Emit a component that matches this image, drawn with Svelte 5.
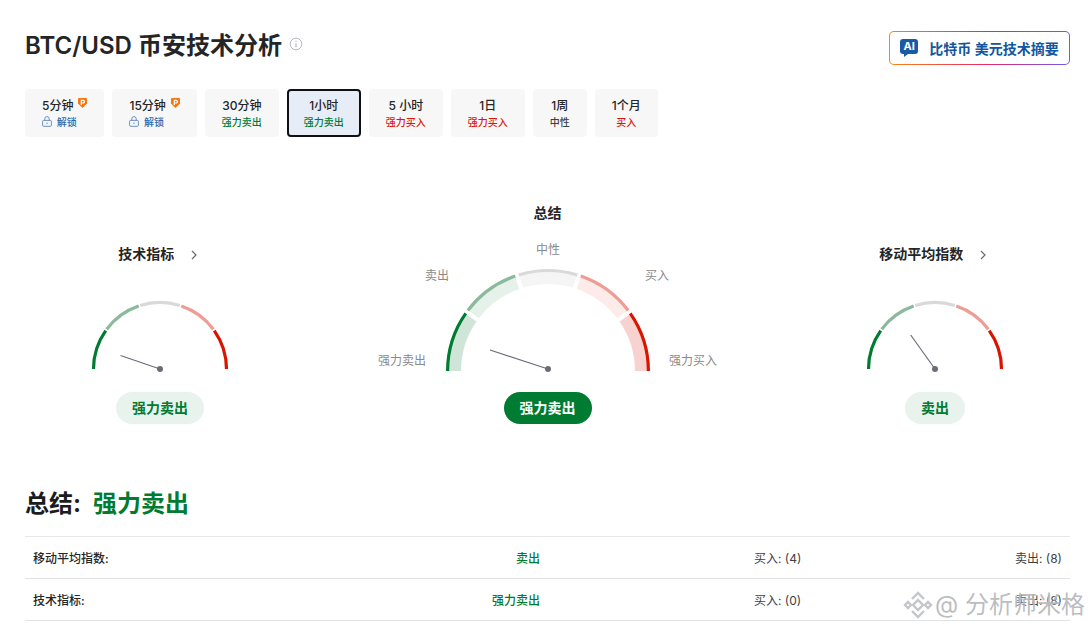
<script>
  const tabs = [
    { label: '5分钟', pro: true, sub: '解锁', tone: 'lock' },
    { label: '15分钟', pro: true, sub: '解锁', tone: 'lock' },
    { label: '30分钟', sub: '强力卖出', tone: 'sell' },
    { label: '1小时', sub: '强力卖出', tone: 'sell', active: true },
    { label: '5 小时', sub: '强力买入', tone: 'buy' },
    { label: '1日', sub: '强力买入', tone: 'buy' },
    { label: '1周', sub: '中性', tone: 'neutral' },
    { label: '1个月', sub: '买入', tone: 'buy' }
  ];

  const rows = [
    { name: '移动平均指数:', value: '卖出', buy: 4, sell: 8 },
    { name: '技术指标:', value: '强力卖出', buy: 0, sell: 8 }
  ];

  const strokeColors = ['#007c32', '#8ab99c', '#d9d9d9', '#ee9c94', '#d91400'];
  const bandColors = ['#cfe5d8', '#e6f1ea', '#f5f5f5', '#fcebe9', '#f7d2ce'];

  // angle in degrees: 0 is the left end of the dial, 180 the right end
  function pt(cx, cy, r, a) {
    const t = (a * Math.PI) / 180;
    return `${(cx - r * Math.cos(t)).toFixed(2)} ${(cy - r * Math.sin(t)).toFixed(2)}`;
  }

  function arc(cx, cy, r, a0, a1) {
    return `M${pt(cx, cy, r, a0)} A${r} ${r} 0 0 1 ${pt(cx, cy, r, a1)}`;
  }

  function band(cx, cy, r0, r1, a0, a1) {
    return `M${pt(cx, cy, r1, a0)} A${r1} ${r1} 0 0 1 ${pt(cx, cy, r1, a1)} L${pt(cx, cy, r0, a1)} A${r0} ${r0} 0 0 0 ${pt(cx, cy, r0, a0)} Z`;
  }

  const segs = [0, 1, 2, 3, 4].map((i) => ({
    a0: i === 0 ? 0 : i * 36 + 0.7,
    a1: i === 4 ? 180 : (i + 1) * 36 - 0.7
  }));
</script>

{#snippet small(nx, ny)}
  <svg class="dial" width="150" height="80" viewBox="0 0 150 80">
    {#each segs as s, i}
      <path d={arc(75, 75, 66.5, s.a0, s.a1)} fill="none" stroke={strokeColors[i]} stroke-width="3.2" />
    {/each}
    <line x1={nx} y1={ny} x2="75" y2="75" stroke="#6a6d78" stroke-width="1.2" />
    <circle cx="75" cy="75" r="3" fill="#6a6d78" />
  </svg>
{/snippet}

{#snippet chevron()}
  <svg class="chev" width="8" height="10" viewBox="0 0 8 10"><path d="M2 1l4 4-4 4" fill="none" stroke="#6a6d78" stroke-width="1.2" /></svg>
{/snippet}

<main class="page">
  <header class="head">
    <div class="title-wrap">
      <h1>BTC/USD 币安技术分析</h1>
      <svg class="info" width="14" height="14" viewBox="0 0 14 14">
        <circle cx="7" cy="7" r="5.8" fill="none" stroke="#b5b8bd" stroke-width="1" />
        <path d="M7 6.2v4M7 3.8v1.2" stroke="#b5b8bd" stroke-width="1.2" />
      </svg>
    </div>
    <button class="ai-btn">
      <span class="ai-icon">AI</span>
      <span>比特币 美元技术摘要</span>
    </button>
  </header>

  <nav class="tabs">
    {#each tabs as t}
      <div class="tab" class:active={t.active}>
        <div class="tab-label" class:has-pro={t.pro}>
          <span>{t.label}</span>
          {#if t.pro}
            <svg class="pro" width="9" height="10" viewBox="0 0 9 10">
              <path d="M1 0h7a1 1 0 011 1v4.6L4.5 10 0 5.6V1a1 1 0 011-1z" fill="#f5770f" />
              <path d="M3.3 7V2.4h1.8a1.25 1.25 0 010 2.6H3.3" fill="none" stroke="#fff" stroke-width="1.2" />
            </svg>
          {/if}
        </div>
        <div class="tab-sub {t.tone}">
          {#if t.tone === 'lock'}
            <svg width="10" height="11" viewBox="0 0 10 11">
              <rect x="0.6" y="4.4" width="8.8" height="5.9" rx="1" fill="none" stroke="#5b87bd" stroke-width="0.9" />
              <path d="M2.8 4.4V2.8a2.2 2.2 0 014.4 0v1.6" fill="none" stroke="#5b87bd" stroke-width="0.9" />
              <path d="M5 6.6v1.4" stroke="#5b87bd" stroke-width="1" />
            </svg>
          {/if}
          {t.sub}
        </div>
      </div>
    {/each}
  </nav>

  <section class="gauges">
    <div class="gauge side">
      <div class="g-title">技术指标 {@render chevron()}</div>
      {@render small(35.5, 61.5)}
      <div class="pill soft">强力卖出</div>
    </div>

    <div class="gauge main-gauge">
      <div class="g-title top">总结</div>
      <svg class="dial" width="350" height="146" viewBox="0 0 350 146">
        <text x="175" y="23" text-anchor="middle">中性</text>
        <text x="64" y="49" text-anchor="middle">卖出</text>
        <text x="284" y="49" text-anchor="middle">买入</text>
        <text x="29" y="134" text-anchor="middle">强力卖出</text>
        <text x="320" y="134" text-anchor="middle">强力买入</text>
        {#each segs as s, i}
          <path
            d={band(175, 140, 87, 100, i === 0 ? 0 : i * 36 + 1.3, i === 4 ? 180 : (i + 1) * 36 - 1.3)}
            fill={bandColors[i]}
          />
          <path d={arc(175, 140, 100.4, s.a0 + (i ? 0.3 : 0), s.a1 - (i < 4 ? 0.3 : 0))} fill="none" stroke={strokeColors[i]} stroke-width="3.2" />
        {/each}
        <line x1="117" y1="119" x2="175" y2="138" stroke="#6a6d78" stroke-width="1.1" />
        <circle cx="175" cy="138" r="3" fill="#6a6d78" />
      </svg>
      <div class="pill solid">强力卖出</div>
    </div>

    <div class="gauge side">
      <div class="g-title">移动平均指数 {@render chevron()}</div>
      {@render small(50.7, 41)}
      <div class="pill soft">卖出</div>
    </div>
  </section>

  <h2 class="summary">总结:<span>强力卖出</span></h2>

  <div class="table">
    {#each rows as r}
      <div class="row">
        <div class="r-name">{r.name}</div>
        <div class="r-value">{r.value}</div>
        <div class="r-buy">买入: ({r.buy})</div>
        <div class="r-sell">卖出: ({r.sell})</div>
      </div>
    {/each}
  </div>

  <div class="watermark">
    <svg width="30" height="30" viewBox="0 0 30 30">
      <g fill="none" stroke="#c4c6ca" stroke-width="2.4">
        <path d="M9 9l6-6 6 6" />
        <path d="M9 21l6 6 6-6" />
        <path d="M10 15l5-5 5 5-5 5z" />
        <path d="M2 15l3-3 3 3-3 3z" />
        <path d="M22 15l3-3 3 3-3 3z" />
      </g>
    </svg>
    <span>@ 分析师米格</span>
  </div>
</main>

<style>
  :global(body) {
    margin: 0;
    background: #fff;
  }

  .page {
    position: relative;
    height: 631px;
    overflow: hidden;
    box-sizing: border-box;
    padding: 30px 20px 0 25px;
    font-family: Inter, 'Noto Sans CJK SC', sans-serif;
    color: #232526;
  }

  .head {
    display: flex;
    justify-content: space-between;
    align-items: flex-start;
    height: 59px;
  }

  .title-wrap {
    display: flex;
    align-items: flex-start;
    gap: 7px;
  }

  h1 {
    margin: 0;
    font-size: 24px;
    line-height: 32px;
    font-weight: 600;
  }

  .info {
    margin-top: 7px;
  }

  .ai-btn {
    display: flex;
    align-items: center;
    justify-content: center;
    gap: 11px;
    width: 181px;
    height: 34px;
    margin-top: 1px;
    padding: 0 0 1px;
    border: 1px solid transparent;
    border-radius: 5px;
    background:
      linear-gradient(#fff, #fff) padding-box,
      linear-gradient(90deg, #f5870f, #e6266e 55%, #6a5cf0) border-box;
    color: #1256a0;
    font: 600 14px Inter, 'Noto Sans CJK SC', sans-serif;
  }

  .ai-icon {
    position: relative;
    width: 18px;
    height: 15px;
    margin-bottom: 2px;
    border-radius: 3px;
    background: #1a5aa5;
    color: #fff;
    font-size: 11px;
    font-weight: 700;
    line-height: 15px;
    text-align: center;
  }

  .ai-icon::after {
    content: '';
    position: absolute;
    left: 4px;
    bottom: -3px;
    border-left: 4px solid #1a5aa5;
    border-bottom: 3px solid transparent;
  }

  .tabs {
    display: flex;
    gap: 8px;
  }

  .tab {
    box-sizing: border-box;
    height: 48px;
    padding: 8px 17px 0;
    border-radius: 4px;
    background: #f7f7f8;
    text-align: center;
    white-space: nowrap;
  }

  .tab.active {
    padding: 6px 15px 0;
    border: 2px solid #0f1114;
    background: #e6edf6;
  }

  .tab-label {
    display: flex;
    justify-content: center;
    align-items: flex-start;
    gap: 3px;
    font-size: 12px;
    font-weight: 500;
    line-height: 18px;
  }

  .tab-label.has-pro {
    gap: 5px;
  }

  .pro {
    margin-top: 1px;
  }

  .tab-sub {
    margin-top: -1px;
    font-size: 10px;
    font-weight: 500;
    line-height: 16px;
  }

  .tab-sub svg {
    vertical-align: -1px;
    margin-right: 2px;
  }

  .lock {
    color: #2a6bb0;
    text-align: left;
  }

  .sell {
    color: #007c32;
  }

  .buy {
    color: #e0150a;
  }

  .neutral {
    color: #3d4043;
  }

  .gauges {
    display: grid;
    grid-template-columns: 270px 1fr 270px;
    align-items: end;
    margin-top: 66px;
  }

  .gauge {
    display: flex;
    flex-direction: column;
    align-items: center;
  }

  .g-title {
    font-size: 14px;
    font-weight: 600;
    line-height: 20px;
  }

  .side .g-title {
    margin-bottom: 30px;
    padding-right: 4px;
  }

  .chev {
    margin-left: 12px;
    vertical-align: -1px;
  }

  .g-title.top {
    margin-bottom: 8px;
  }

  .dial {
    display: block;
  }

  .dial text {
    font-size: 12px;
    fill: #8a8a8a;
  }

  .pill {
    height: 32px;
    margin-top: 18px;
    padding: 0 16px;
    border-radius: 16px;
    font-size: 14px;
    font-weight: 600;
    line-height: 32px;
  }

  .main-gauge .pill {
    margin-top: 15px;
  }

  .soft {
    background: #e9f3ee;
    color: #007c32;
  }

  .solid {
    background: #007c32;
    color: #fff;
  }

  .summary {
    display: flex;
    gap: 12px;
    margin: 63px 0 15px;
    font-size: 24px;
    font-weight: 700;
    line-height: 34px;
    color: #1a1c1e;
  }

  .summary span {
    color: #007c32;
    font-weight: 600;
  }

  .table {
    border-top: 1px solid #e6e7ea;
  }

  .row {
    display: grid;
    grid-template-columns: 300px 207px 1fr auto;
    align-items: center;
    box-sizing: border-box;
    height: 42px;
    padding: 0 8px;
    border-bottom: 1px solid #e0e2e5;
    font-size: 12px;
  }

  .r-name {
    font-weight: 500;
  }

  .r-value {
    text-align: right;
    color: #007c32;
    font-weight: 500;
  }

  .r-buy {
    margin-left: 214px;
    color: #3d4043;
  }

  .r-sell {
    color: #3d4043;
  }

  .watermark {
    position: absolute;
    left: 903px;
    bottom: 11px;
    display: flex;
    align-items: center;
    gap: 2px;
    font-size: 24px;
    line-height: 30px;
    color: rgba(165, 168, 172, 0.75);
    text-shadow: 0 0 2px rgba(255, 255, 255, 0.9);
    white-space: nowrap;
  }
</style>
